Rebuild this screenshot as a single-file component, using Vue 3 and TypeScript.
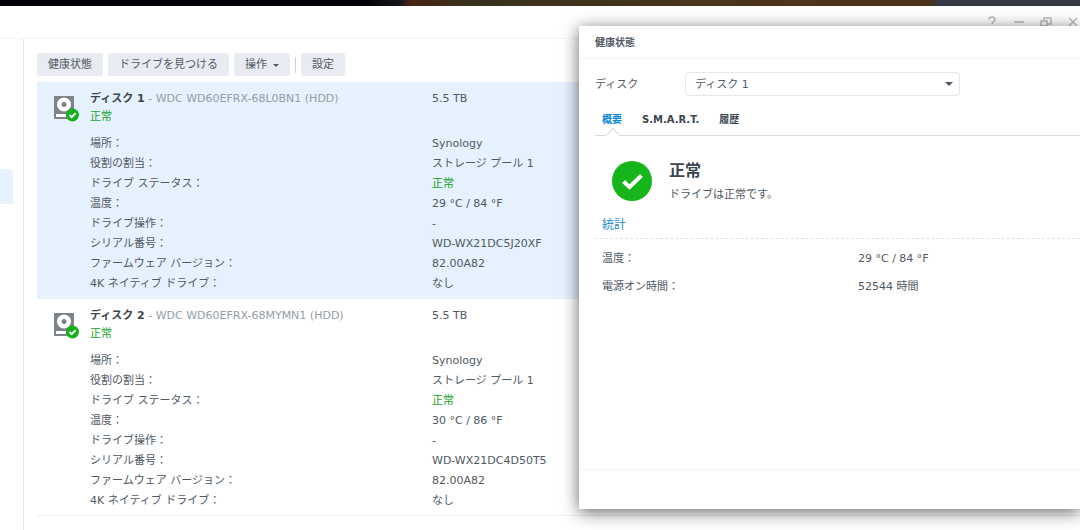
<script setup lang="ts">
import { ref } from 'vue'

interface Field {
  label: string
  value: string
  ok?: boolean
}
interface Disk {
  id: number
  name: string
  model: string
  size: string
  fields: Field[]
}

function makeDisk(id: number, model: string, temp: string, serial: string): Disk {
  return {
    id,
    name: `ディスク ${id}`,
    model,
    size: '5.5 TB',
    fields: [
      { label: '場所：', value: 'Synology' },
      { label: '役割の割当：', value: 'ストレージ プール 1' },
      { label: 'ドライブ ステータス：', value: '正常', ok: true },
      { label: '温度：', value: temp },
      { label: 'ドライブ操作：', value: '-' },
      { label: 'シリアル番号：', value: serial },
      { label: 'ファームウェア バージョン：', value: '82.00A82' },
      { label: '4K ネイティブ ドライブ：', value: 'なし' },
    ],
  }
}

const disks: Disk[] = [
  makeDisk(1, 'WDC WD60EFRX-68L0BN1 (HDD)', '29 °C / 84 °F', 'WD-WX21DC5J20XF'),
  makeDisk(2, 'WDC WD60EFRX-68MYMN1 (HDD)', '30 °C / 86 °F', 'WD-WX21DC4D50T5'),
]
const selected = ref(1)
const chosen = ref(1)
const tabs = ['概要', 'S.M.A.R.T.', '履歴']
const activeTab = ref('概要')
const stats: Field[] = [
  { label: '温度：', value: '29 °C / 84 °F' },
  { label: '電源オン時間：', value: '52544 時間' },
]
</script>

<template>
  <div class="desktop">
    <div class="wallpaper"></div>
    <div class="window">
      <header class="titlebar">
        <button type="button" class="win-btn" aria-label="ヘルプ">
          <svg width="14" height="14" viewBox="0 0 14 14"><path d="M4 4.500C4 2.800 5.200 2 7 2s3 .9 3 2.400C10 6.500 7 6.500 7 9M7 10.500V12" /></svg>
        </button>
        <button type="button" class="win-btn" aria-label="最小化">
          <svg width="14" height="14" viewBox="0 0 14 14"><path d="M2 7h10" /></svg>
        </button>
        <button type="button" class="win-btn" aria-label="元に戻す">
          <svg width="14" height="14" viewBox="0 0 14 14"><path d="M2 6h6v5H2zM5 6V3h7v6H8" /></svg>
        </button>
        <button type="button" class="win-btn" aria-label="閉じる">
          <svg width="14" height="14" viewBox="0 0 14 14"><path d="M3 3l8 8M11 3l-8 8" /></svg>
        </button>
      </header>
      <div class="content">
        <nav class="sidebar"><a href="#" class="nav-active" aria-label="HDD/SSD"></a></nav>
        <main class="main">
          <div class="toolbar">
            <button type="button" class="btn">健康状態</button>
            <button type="button" class="btn">ドライブを見つける</button>
            <button type="button" class="btn">操作<span class="caret"></span></button>
            <span class="divider"></span>
            <button type="button" class="btn">設定</button>
          </div>
          <section
            v-for="d in disks"
            :key="d.id"
            class="disk"
            :class="{ selected: d.id === selected }"
            @click="selected = d.id"
          >
            <svg class="disk-icon" width="27" height="28" viewBox="0 0 27 28">
              <rect x="1" y="1" width="20" height="23" rx="1" fill="#7b8288" />
              <circle cx="11" cy="9.500" r="7" fill="#fff" />
              <circle cx="11" cy="9.500" r="2.500" fill="#7b8288" />
              <rect x="3" y="19" width="10" height="3" fill="#fff" />
              <circle cx="19.500" cy="20" r="6.500" fill="#16b01c" />
              <path d="M16.500 20l2.200 2.200 3.900-4" fill="none" stroke="#fff" stroke-width="1.800" />
            </svg>
            <div class="disk-body">
              <div class="line head">
                <span><b>{{ d.name }}</b><span class="model"> - {{ d.model }}</span></span>
                <span>{{ d.size }}</span>
              </div>
              <div class="status ok">正常</div>
              <dl class="fields">
                <div v-for="f in d.fields" :key="f.label" class="line">
                  <dt>{{ f.label }}</dt>
                  <dd :class="{ ok: f.ok }">{{ f.value }}</dd>
                </div>
              </dl>
            </div>
          </section>
        </main>
      </div>
    </div>

    <div class="dialog" role="dialog" aria-labelledby="dlg-title">
      <h1 id="dlg-title" class="dialog-title">健康状態</h1>
      <div class="dialog-body">
        <div class="picker">
          <label for="disk-select">ディスク</label>
          <div class="select-wrap">
            <select id="disk-select" v-model="chosen">
              <option v-for="d in disks" :key="d.id" :value="d.id">{{ d.name }}</option>
            </select>
            <span class="caret select-caret"></span>
          </div>
        </div>
        <div class="tabs" role="tablist">
          <button
            v-for="t in tabs"
            :key="t"
            type="button"
            role="tab"
            class="tab"
            :class="{ active: t === activeTab }"
            :aria-selected="t === activeTab"
            @click="activeTab = t"
          >{{ t }}</button>
        </div>
        <div class="summary">
          <svg width="40" height="40" viewBox="0 0 40 40">
            <circle cx="20" cy="20" r="20" fill="#16b51b" />
            <path d="M11.500 20.500l6 5.500L29.500 14.500" fill="none" stroke="#fff" stroke-width="4" />
          </svg>
          <div>
            <h2 class="summary-title">正常</h2>
            <p class="summary-text">ドライブは正常です。</p>
          </div>
        </div>
        <h3 class="stats-title">統計</h3>
        <dl class="stats">
          <div v-for="s in stats" :key="s.label" class="stat">
            <dt>{{ s.label }}</dt>
            <dd>{{ s.value }}</dd>
          </div>
        </dl>
      </div>
      <footer class="dialog-footer"></footer>
    </div>
  </div>
</template>

<style>
body {
  margin: 0;
}
</style>

<style scoped>
.desktop {
  position: relative;
  min-height: 100vh;
  overflow: hidden;
  display: flex;
  flex-direction: column;
  background: #fff;
  color: #505963;
  font: 11px/20px "DejaVu Sans", "Noto Sans CJK JP", sans-serif;
}
* {
  box-sizing: border-box;
}
button,
select {
  font: inherit;
  color: inherit;
  border: 0;
  margin: 0;
  padding: 0;
  background: none;
}
h1,
h2,
h3,
p,
dl,
dd {
  margin: 0;
}
.wallpaper {
  height: 6px;
  background: linear-gradient(90deg, #020208 0 34%, #14171a 37%, #4a2412 38%, #38301f 44%, #48351c 65%, #4c3218 86%, #343944 87%);
}
.window {
  flex: 1;
  display: flex;
  flex-direction: column;
}
.titlebar {
  height: 33px;
  display: flex;
  justify-content: flex-end;
  align-items: center;
  gap: 13px;
  border-bottom: 1px solid #f5f6f7;
}
.win-btn {
  width: 14px;
  height: 14px;
  display: flex;
}
.win-btn svg {
  fill: none;
  stroke: #b8bdc1;
  stroke-width: 1.5;
}
.content {
  flex: 1;
  display: flex;
}
.sidebar {
  width: 24px;
  flex: none;
  padding-top: 130px;
  border-right: 1px solid #e4e7ea;
}
.nav-active {
  display: block;
  width: 13px;
  height: 35px;
  border-radius: 0 3px 3px 0;
  background: #e6f2fd;
}
.main {
  flex: 1;
  padding: 14px 0 0 13px;
}
.toolbar {
  display: flex;
  align-items: center;
  gap: 5px;
  margin-bottom: 6px;
}
.btn {
  display: flex;
  align-items: center;
  gap: 6px;
  height: 23px;
  padding: 1px 11px 0;
  border-radius: 3px;
  background: #e8ebf1;
}
.caret {
  border: 3px solid transparent;
  border-top-color: currentColor;
  border-bottom: 0;
}
.divider {
  width: 1px;
  height: 16px;
  background: #ccd1d6;
}
.disk {
  display: flex;
  align-items: flex-start;
  padding: 8px 0 4px 16px;
  border-bottom: 1px solid #f1f2f4;
}
.disk.selected {
  background: #e5f1fd;
  border-color: #e5f1fd;
}
.disk-icon {
  margin-top: 5px;
  flex: none;
}
.disk-body {
  flex: 1;
  margin-left: 10px;
}
.line {
  display: grid;
  grid-template-columns: 342px 1fr;
  height: 20px;
}
.head,
.status {
  height: 18px;
  line-height: 18px;
}
.head b {
  color: #3c4651;
}
.model {
  color: #949da6;
}
.ok {
  color: #14a51c;
}
.fields {
  margin-top: 8px;
}
.dialog {
  position: absolute;
  left: 579px;
  right: 0;
  top: 26px;
  bottom: 21px;
  display: flex;
  flex-direction: column;
  background: #fff;
  box-shadow: 0 3px 16px rgba(0, 0, 0, 0.6);
}
.dialog-title {
  height: 33px;
  padding-left: 16px;
  font-size: 10px;
  line-height: 34px;
  border-bottom: 1px solid #f3f4f5;
}
.dialog-body {
  flex: 1;
  padding: 13px 0 0 16px;
}
.picker {
  display: flex;
  align-items: center;
}
.picker label {
  width: 90px;
  padding-top: 2px;
}
.select-wrap {
  display: grid;
  align-items: center;
  width: 275px;
}
.select-wrap > * {
  grid-area: 1 / 1;
}
select {
  appearance: none;
  width: 100%;
  height: 24px;
  padding: 2px 9px 0;
  border: 1px solid #e2e8eb;
  border-radius: 3px;
}
.select-caret {
  justify-self: end;
  margin-right: 7px;
  border-width: 4px;
  border-bottom: 0;
  pointer-events: none;
}
.tabs {
  display: flex;
  align-items: flex-end;
  gap: 20px;
  height: 40px;
  padding: 0 7px;
  border-bottom: 1px solid #d8dbdd;
}
.tab {
  position: relative;
  height: 30px;
  line-height: 30px;
  font-size: 10px;
  font-weight: bold;
  color: #3c4651;
}
.tab.active {
  color: #0b87d8;
}
.tab.active::after {
  content: "";
  position: absolute;
  left: 50%;
  bottom: -5px;
  width: 8px;
  height: 8px;
  margin-left: -4px;
  transform: rotate(45deg);
  border: 1px solid #d8dbdd;
  border-right-color: transparent;
  border-bottom-color: transparent;
  background: #fff;
}
.summary {
  display: flex;
  align-items: center;
  gap: 17px;
  padding: 22px 0 0 17px;
}
.summary-title {
  font-size: 16px;
  line-height: 26px;
  color: #3c4651;
}
.summary-text {
  padding-top: 2px;
  line-height: 18px;
}
.stats-title {
  margin-top: 8px;
  padding: 1px 7px 0;
  font-size: 12px;
  font-weight: normal;
  line-height: 25px;
  color: #1989c9;
  border-bottom: 1px dashed #dfe3e6;
}
.stats {
  padding: 6px 7px;
}
.stat {
  display: grid;
  grid-template-columns: 256px 1fr;
  line-height: 28px;
}
.dialog-footer {
  height: 40px;
  border-top: 1px solid #f3f4f5;
}
</style>
